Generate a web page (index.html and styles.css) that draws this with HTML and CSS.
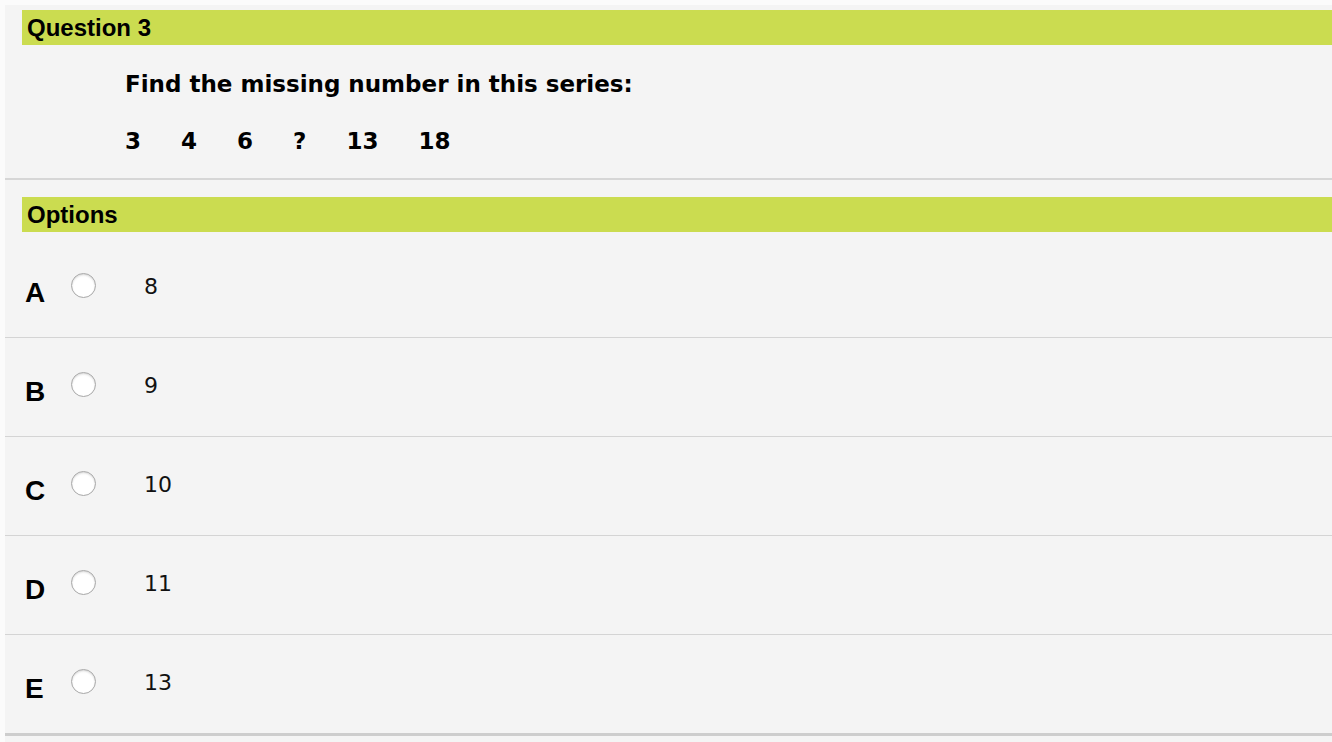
FILE: index.html
```html
<!DOCTYPE html>
<html lang="en">
<head>
<meta charset="utf-8">
<title>Question 3</title>
<link rel="stylesheet" href="styles.css">
</head>
<body>
<div class="page">
  <section class="question">
    <h2 class="bar">Question 3</h2>
    <div class="question-body">
      <p class="prompt">Find the missing number in this series:</p>
      <p class="series"><span>3</span><span>4</span><span>6</span><span>?</span><span>13</span><span>18</span></p>
    </div>
  </section>
  <section class="options">
    <h2 class="bar">Options</h2>
    <ul class="option-list">
      <li class="option"><span class="letter">A</span><input class="radio" type="radio" name="ans"><span class="value">8</span></li>
      <li class="option"><span class="letter">B</span><input class="radio" type="radio" name="ans"><span class="value">9</span></li>
      <li class="option"><span class="letter">C</span><input class="radio" type="radio" name="ans"><span class="value">10</span></li>
      <li class="option"><span class="letter">D</span><input class="radio" type="radio" name="ans"><span class="value">11</span></li>
      <li class="option last"><span class="letter">E</span><input class="radio" type="radio" name="ans"><span class="value">13</span></li>
    </ul>
  </section>
</div>
</body>
</html>
```

FILE: styles.css
```css
html, body {
  margin: 0;
  padding: 0;
  background: #fbfbfb;
}
.page {
  margin: 5px 0 0 5px;
  background: #f4f4f4;
  min-height: 737px;
  color: #0a0a0a;
}
.bar {
  margin: 0 0 0 17px;
  height: 35px;
  line-height: 35px;
  padding-left: 5px;
  background: #cbdc50;
  font-family: "Liberation Sans", Arial, sans-serif;
  font-weight: bold;
  font-size: 24px;
  color: #000;
}
.question {
  padding-top: 5px;
  border-bottom: 2px solid #d6d6d6;
}
.question-body {
  padding: 25px 0 23px 120px;
  font-family: "DejaVu Sans", Verdana, sans-serif;
  font-weight: bold;
  font-size: 23px;
  line-height: 28px;
  color: #000;
}
.prompt {
  margin: 0 0 29px 0;
}
.series {
  margin: 0;
  display: flex;
  gap: 40px;
}
.options {
  padding-top: 17px;
}
.option-list {
  list-style: none;
  margin: 0;
  padding: 7px 0 0 0;
}
.option {
  display: flex;
  align-items: flex-start;
  height: 98px;
  border-bottom: 1px solid #d4d4d4;
  padding-left: 20px;
}
.option.last {
  border-bottom: 3px solid #cdcdcd;
}
.letter {
  width: 46px;
  margin-top: 40px;
  line-height: 28px;
  font-family: "Liberation Sans", Arial, sans-serif;
  font-weight: bold;
  font-size: 28px;
  color: #000;
}
.radio {
  appearance: none;
  -webkit-appearance: none;
  margin: 34px 0 0 0;
  width: 25px;
  height: 25px;
  border-radius: 50%;
  border: 1px solid #a8a8a8;
  background: radial-gradient(circle at 50% 60%, #ffffff 55%, #f1f1f1 100%);
  box-shadow: inset 0 1px 2px rgba(0, 0, 0, 0.14);
  box-sizing: border-box;
}
.value {
  margin: 35px 0 0 48px;
  line-height: 26px;
  font-family: "DejaVu Sans", Verdana, sans-serif;
  font-size: 22px;
  color: #111;
}
```
